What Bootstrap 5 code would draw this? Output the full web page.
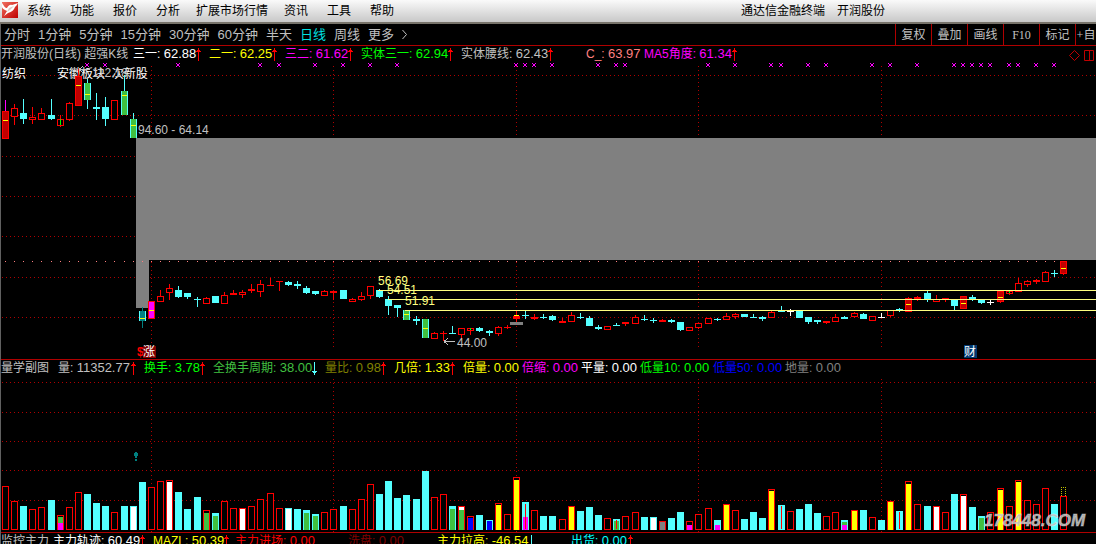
<!DOCTYPE html>
<html lang="zh-CN">
<head>
<meta charset="utf-8">
<meta name="viewport" content="width=device-width, initial-scale=1">
<title>通达信金融终端 开润股份</title>
<link href="https://cdn.jsdelivr.net/npm/bootstrap@5.3.0/dist/css/bootstrap.min.css" rel="stylesheet">
<script src="https://cdn.jsdelivr.net/npm/bootstrap@5.3.0/dist/js/bootstrap.bundle.min.js"></script>
<style>
:root{--line:#b00000}
body{background:#000;color:#c0c0c0;font-family:"Liberation Sans","Noto Sans CJK SC",sans-serif;font-size:12px;line-height:18px;overflow:hidden}
.app{height:100vh;overflow:hidden}
.app-menu{height:24px;background:linear-gradient(#fafafa,#c8c8c8 22px);border-bottom:2px solid #77736a;color:#000}
.app-menu a{color:#000;line-height:22px;padding:0}
.menu-items{gap:19px;margin-left:9px}
.menu-items .wide-gap{margin-right:-3px}
.app-title{left:741px;gap:12px;line-height:22px}
.workspace{border-left:1px solid #606060}
.period-bar{height:22px;border-bottom:1px solid var(--line)}
.period-bar .periods{gap:8px;padding-left:3px;font-size:13px;line-height:21px}
.periods a{color:#c0c0c0;padding:0}
.periods a.active{color:#00e0e0}
.tool-btn{width:36px;height:21px;border:0;border-left:1px solid var(--line);background:none;color:#c0c0c0;padding:0;white-space:nowrap;overflow:hidden;font-family:"Liberation Serif","Noto Sans CJK SC",serif}
.tool-btn.cut{width:21px}
.readout{display:grid;height:17px;line-height:16px;white-space:nowrap}
.readout>div{display:flex;justify-content:space-between;align-items:flex-start;padding-right:8px}
.readout .num{font-size:13px}
.readout svg{flex:none;margin-top:2px}
.readout-main{grid-template-columns:132px 76px 76px 76px 100px 100px 25px 58px 96px 1fr}
.readout-vol{grid-template-columns:57px 86px 69px 112px 69px 69px 59px 59px 59px 73px 72px 1fr;border-top:1px solid var(--line);height:18px}
.readout-flow{grid-template-columns:52px 100px 82px 113px 89px 104px 30px 70px 1fr;border-top:1px solid var(--line)}
.c-white{color:#fff}.c-yellow{color:#ff0}.c-magenta{color:#f0f}.c-green{color:#0f0}.c-salmon{color:#ff8080}
.c-leaf{color:#40c040}.c-olive{color:#808000}.c-blue{color:#00f}.c-gray{color:#808080}.c-red{color:#f00}.c-dark{color:#800000}.c-cyan{color:#0ff}
.chart{display:block;width:100%;font-size:12px}
.grid-line{stroke:var(--line);stroke-dasharray:1 3;fill:none}
.watermark{font:italic bold 17px "Liberation Sans",sans-serif}
</style>
</head>
<body>
<div class="app d-flex flex-column">
  <header class="app-menu d-flex position-relative flex-shrink-0">
    <svg width="18" height="20" viewBox="0 0 18 20" aria-hidden="true"><defs><linearGradient id="lg" x2="1" y2="1"><stop stop-color="#f07060"/><stop offset="1" stop-color="#c00000"/></linearGradient></defs><rect x="2" y="2" width="16" height="16" fill="url(#lg)"/><path d="M2 3C4 6 5 8 7 8C8 6 10 4 12 5L18 3C17 5 16 6 15 7C14 10 12 12 8 13L4 16L7 11C4 10 2 8 2 7Z" fill="#fff"/><path d="M9 8l5-2-4 4-3 2z" fill="#e0c8c4"/></svg>
    <nav class="menu-items d-flex">
      <a class="nav-link" href="#">系统</a><a class="nav-link" href="#">功能</a><a class="nav-link" href="#">报价</a><a class="nav-link wide-gap" href="#">分析</a><a class="nav-link wide-gap" href="#">扩展市场行情</a><a class="nav-link" href="#">资讯</a><a class="nav-link" href="#">工具</a><a class="nav-link" href="#">帮助</a>
    </nav>
    <div class="app-title d-flex position-absolute"><span>通达信金融终端</span><span>开润股份</span></div>
  </header>
  <main class="workspace flex-grow-1">
    <div class="period-bar d-flex">
      <nav class="periods d-flex flex-nowrap text-nowrap">
        <a class="nav-link" href="#">分时</a><a class="nav-link" href="#">1分钟</a><a class="nav-link" href="#">5分钟</a><a class="nav-link" href="#">15分钟</a><a class="nav-link" href="#">30分钟</a><a class="nav-link" href="#">60分钟</a><a class="nav-link" href="#">半天</a><a class="nav-link active" href="#" aria-current="page">日线</a><a class="nav-link" href="#">周线</a><a class="nav-link" href="#">更多</a>
        <svg width="6" height="21" fill="none" stroke="#c0c0c0"><path d="M0.5 6l4 4.500-4 4.500"/></svg>
      </nav>
      <div class="ms-auto d-flex flex-shrink-0">
        <button class="tool-btn">复权</button><button class="tool-btn">叠加</button><button class="tool-btn">画线</button><button class="tool-btn">F10</button><button class="tool-btn">标记</button><button class="tool-btn cut">+自</button>
      </div>
    </div>
    <div class="readout readout-main">
      <div>开润股份(日线) 超强K线</div>
      <div class="c-white" data-arrow="up"><span>三一: <span class="num">62.88</span></span></div>
      <div class="c-yellow" data-arrow="up"><span>二一: <span class="num">62.25</span></span></div>
      <div class="c-magenta" data-arrow="up"><span>三二: <span class="num">61.62</span></span></div>
      <div class="c-green" data-arrow="up"><span>实体三一: <span class="num">62.94</span></span></div>
      <div data-arrow="up"><span>实体腰线: <span class="num">62.43</span></span></div>
      <div></div>
      <div class="c-salmon"><span>C_: <span class="num">63.97</span></span></div>
      <div class="c-magenta" data-arrow="up"><span>MA5角度: <span class="num">61.34</span></span></div>
      <div class="justify-content-end pe-0"><svg width="28" height="14" fill="none" stroke="#c00000"><path d="M1.500 7.500l5-5 5 5-5 5zM16.500 2.500h9v10h-9zM21.500 2.500v10"/></svg></div>
    </div>
    <svg class="chart" id="price" height="296"></svg>
    <div class="readout readout-vol">
      <div>量学副图</div>
      <div data-arrow="up"><span>量: <span class="num">11352.77</span></span></div>
      <div class="c-green" data-arrow="up"><span>换手: <span class="num">3.78</span></span></div>
      <div class="c-leaf" data-arrow="down"><span>全换手周期: <span class="num">38.00</span></span></div>
      <div class="c-olive" data-arrow="up"><span>量比: <span class="num">0.98</span></span></div>
      <div class="c-yellow" data-arrow="up"><span>几倍: <span class="num">1.33</span></span></div>
      <div class="c-yellow"><span>倍量: <span class="num">0.00</span></span></div>
      <div class="c-magenta"><span>倍缩: <span class="num">0.00</span></span></div>
      <div class="c-white"><span>平量: <span class="num">0.00</span></span></div>
      <div class="c-green"><span>低量10: <span class="num">0.00</span></span></div>
      <div class="c-blue"><span>低量50: <span class="num">0.00</span></span></div>
      <div class="c-gray"><span>地量: <span class="num">0.00</span></span></div>
    </div>
    <svg class="chart" id="volume" height="155"></svg>
    <div class="readout readout-flow">
      <div>监控主力</div>
      <div class="c-white" data-arrow="up"><span>主力轨迹: <span class="num">60.49</span></span></div>
      <div class="c-yellow" data-arrow="up"><span>MAZL: <span class="num">50.39</span></span></div>
      <div class="c-red"><span>主力进场: <span class="num">0.00</span></span></div>
      <div class="c-dark"><span>洗盘: <span class="num">0.00</span></span></div>
      <div class="c-yellow" data-arrow="down"><span>主力拉高: <span class="num">-46.54</span></span></div>
      <div></div>
      <div class="c-cyan" data-arrow="up"><span>出货: <span class="num">0.00</span></span></div>
    </div>
  </main>
</div>
<script>
// Trend arrows after the readout values
document.querySelectorAll('[data-arrow]').forEach(function(cell){
  var up=cell.dataset.arrow==='up';
  cell.insertAdjacentHTML('beforeend','<svg width="5" height="13" shape-rendering="crispEdges" fill="'+(up?'#f00':'#54ffff')+'"><path d="'+(up?'M2 0h1v13h-1zM1 2h3v2h-3zM0 3h5v1h-5z':'M2 0h1v13h-1zM1 9h3v2h-3zM0 9h5v1h-5z')+'"/></svg>');
});

var RED='#f00',CYAN='#54ffff',DARK='#c00000',LEAF='#40c040';
function slot(i){return Math.floor(5.45+9.125*i)-1;}
function rect(x,y,w,h,fill){return '<rect x="'+x+'" y="'+y+'" width="'+w+'" height="'+h+'" fill="'+fill+'"/>';}
function frame(x,t,b,color,fill){return rect(x-3,t,7,b-t,color)+rect(x-2,t+1,5,Math.max(b-t-2,0),fill);}
function hgrid(y){return '<line class="grid-line" x1="1" x2="100%" y1="'+(y+.5)+'" y2="'+(y+.5)+'"/>';}
function vgrid(i,a,b){var x=slot(i)+.5;return '<line class="grid-line" x1="'+x+'" x2="'+x+'" y1="'+a+'" y2="'+b+'"/>';}
function text(x,y,s,fill,cls){return '<text x="'+x+'" y="'+y+'" fill="'+fill+'" class="'+(cls||'')+'">'+s+'</text>';}

// kind, body top, body bottom, high, low, marker
// r hollow, f filled red, R limit-up, c falling, g strong fall, t teal, m magenta, x/X/w crosses in cyan/red/white
var candles=`R 111 139 100 139 120|r 108 117 104 125|c 113 119 99 124|r 117 120 107 124|r 113 120 108 120|c 115 119 99 120|r 119 126 115 127 G|r 103 120 102 121|R 76 106 69 106 85|g 83 100 79 109 94|c 107 109 93 120|c 107 119 97 126|r 100 120 100 120|g 91 115 75 115 95|g 119 138 113 138 125|t 311 321 307 328 318|m 301 319 301 319 310|r 296 302 290 302|r 288 293 284 300|c 290 297 286 298|c 293 297 293 299|x 299 300 297 307|r 298 304 297 304|c 296 303 296 303|r 295 304 292 304|r 293 295 290 295|r 292 295 290 298|f 289 291 284 293|r 284 292 280 297|X 285 286 278 286|X 281 282 281 291|c 282 285 281 286|c 284 286 281 289|c 288 293 286 294|c 291 294 291 295|r 291 296 290 296|f 291 293 291 300|c 290 299 290 299|r 299 302 298 302|r 296 300 292 301|r 286 296 286 299|c 290 297 289 298|c 299 306 296 315|c 305 308 305 317|g 310 320 310 320 314|x 319 321 316 325|g 319 338 319 338 328|r 333 339 332 339|X 333 334 331 341|x 333 334 326 334|r 328 335 328 340|r 328 331 328 335 G|c 328 331 327 332|c 331 333 330 336|r 327 334 326 336|X 327 328 325 329|f 316 319 311 322 315|x 315 316 311 319|f 317 319 314 320|x 317 318 314 319|c 316 320 315 321|f 321 323 318 323|r 315 322 312 322|x 317 318 313 319|c 318 326 316 326|c 327 329 325 330|r 326 330 326 330|c 325 326 323 326|r 322 324 322 326|r 317 324 315 324|x 319 320 315 321|c 320 321 318 323|f 320 322 319 322|c 320 322 319 323|c 322 330 322 331|r 327 331 327 331|r 323 328 323 329|r 318 324 318 324|c 319 320 318 321|r 316 320 313 320|r 314 317 313 319|c 314 317 314 317|c 317 318 314 318|c 317 319 316 321|r 312 318 311 318|c 311 312 306 312|w 311 312 309 316|c 311 318 311 318|c 317 322 317 324|c 320 322 320 324|f 321 323 321 324|r 317 322 314 322|c 317 319 316 319|r 313 317 312 318|c 314 319 313 319|r 316 321 316 321|w 317 318 313 318|r 310 316 310 317|c 309 310 308 312|R 298 312 297 312 304|f 297 299 296 301|c 293 300 291 302|r 299 302 295 302|f 298 300 298 302|c 300 306 300 310|R 296 309 296 309 303|c 297 300 295 301|c 300 303 300 304|w 302 303 300 305|R 291 302 291 303 297|r 291 294 291 295 G|r 283 292 278 292|r 281 285 280 287|f 280 282 279 284|r 272 282 271 282|x 273 274 270 277|R 261 274 261 275 268`.split('|');
var s='';
[75,115,156,196,236,277,317].forEach(function(y){s+=hgrid(y);});
[16,36,56,76,96].forEach(function(i){s+=vgrid(i,66,347);});
s+='<path d="M135 138H2000V260H148V308H135Z" fill="#808080"/>';
for(var i=0;i<117;i++)s+=rect(slot(i),261,1,1,'#ff8080');
[9,11,19,28,30,34,37,40,43,56,57,58,60,65,67,68,77,80,84,85,88,90,95,97,100,104,105,106,107,108,110,111,113,115].forEach(function(n){
  s+='<path d="M'+(slot(n)-2)+' 63h1v1h2v-1h1v1h-1v2h1v1h-1v-1h-2v1h-1v-1h1v-2h-1z" fill="#f0f"/>';
});
s+=text(1,78,'纺织','#fff')+text(56,78,'安徽板块&#160; 次新股','#fff')+text(91,77,'112.18','#c0c0c0');
s+='<path d="M78 69.500h11M78 69.500l4-3m-4 3l4 3" stroke="#c0c0c0" fill="none"/>';
candles.forEach(function(row,n){
  var p=row.split(' '),k=p[0],t=+p[1],b=+p[2],hi=+p[3],lo=+p[4],mk=p[5],x=slot(n);
  var col={c:CYAN,g:CYAN,x:CYAN,w:'#fff',t:'#008080'}[k]||RED;
  s+=rect(x,hi,1,t-hi,n===0?'#f0f':col);
  if(lo>b)s+=rect(x,b,1,lo-b,col);
  if(k==='r')s+=frame(x,t,b,RED,'#000');
  else if(k==='R')s+=frame(x,t,b,RED,DARK);
  else if(k==='m')s+=frame(x,t,b,RED,'#f0f');
  else if(k==='g'||k==='t')s+=rect(x-3,t,7,b-t,CYAN)+rect(x-2,t,5,b-t,k==='g'?LEAF:'#008080');
  else s+=rect(x-3,t,7,b-t,col);
  if(mk==='G')s+=rect(x,t,1,b-t-1,'#0f0');else if(mk)s+=rect(x-2,+mk,5,1,'#ff0');
});
[[377,290],[387,299],[404,310]].forEach(function(l){s+='<line x1="'+l[0]+'" x2="100%" y1="'+(l[1]+.5)+'" y2="'+(l[1]+.5)+'" stroke="#ffff80"/>';});
s+=rect(509,322,13,3,'#808080');
s+=text(377,285,'56.69','#ffff80')+text(386,294,'54.51','#ffff80')+text(404,305,'51.91','#ffff80');
s+=text(137,134,'94.60 - 64.14','#c0c0c0')+text(456,347,'44.00','#c0c0c0');
s+='<path d="M443 341.500h11M443 341.500l4-3m-4 3l4 3" stroke="#c0c0c0" fill="none"/>';
s+=text(136,356,'$','#f00','fw-bold')+rect(142,346,13,12,'#800000')+text(142,356,'涨','#fff')+rect(963,345,13,13,'#003870')+text(963,356,'财','#fff');
document.getElementById('price').innerHTML='<g transform="translate(0,-63)" shape-rendering="crispEdges">'+s+'</g>';

// colour and bar top, then each inner fill and its top
var vols='r486|r501|c506|r509|r507|c500|r515 g517 m523|r507|r492|c494|c503|c506|r512|c506|c506 w507|c482|r487|r481|r480 w482|c492|c509|c497|r510 g513|c513 g516|r501|r508|r508 w509|r506|r499|r493|r508|c508 w509|c509|c510 g513|c514 g516|r512|r509|c506|r509|r499|r484|c494|c481|c498|c495|c499|c471|r497|r494|c506 g509|r506 w507 g510|r516 b518|c515|c520 b521|r503 y505|r514|r477 y480|c502 m517 l504|r510|c516|c516|r519|r506 y507|c511|c507|c515|r518|c519 g521 l520|r516|r512|c517|c517 w518|r521 a522|c518|c512|r521 m525|r514|r508|c520 m525|r504 y505|r510|c519|c512|c518|r489 y491|c505 l506|r511|c509|c504|c513|r516|r512|c520 g522 m525|r510 y511|c510|r517|c520|r501 y502|c511 l512|r481 y484|r504|c506|r506 w507|r512|c494|r494 w496|c507|c516 g518|r512|r488 y490|r506|r480 y482|r500|r504|r488|c504|r496'.split('|');
var inner={g:LEAF,m:'#f0f',w:'#fff',b:'#00f',y:'#ff0',a:'#808080'},v='';
[382,412,441,470,500].forEach(function(y){v+=hgrid(y);});
[16,36,56,76,96].forEach(function(i){v+=vgrid(i,379,532);});
vols.forEach(function(row,n){
  var x=slot(n);
  row.split(' ').forEach(function(part,j){
    var k=part[0],y=+part.slice(1);
    if(j===0)v+=k==='r'?frame(x,y,530,RED,'#000'):rect(x-3,y,7,530-y,CYAN);
    else if(k==='l')v+=rect(x,y,1,529-y,RED);
    else v+=rect(x-2,y,5,530-y,inner[k]);
  });
});
v+='<path d="M1060.500 487v9m4 0v-9M1060 487.500h5" stroke="#c0c000" stroke-dasharray="1 1" fill="none"/>';
v+='<path d="M134 452h2v1h1v3h-1v2h-2v-2h-1v-3h1zM134 459h2v2h-2z" fill="#008080"/>';
v+='<text class="watermark" x="983" y="526" fill="#bdbdbd" fill-opacity=".9" stroke="#fff" stroke-opacity=".35">178448.COM</text>';
document.getElementById('volume').innerHTML='<g transform="translate(0,-377)" shape-rendering="crispEdges">'+v+'</g>';
</script>
</body>
</html>
